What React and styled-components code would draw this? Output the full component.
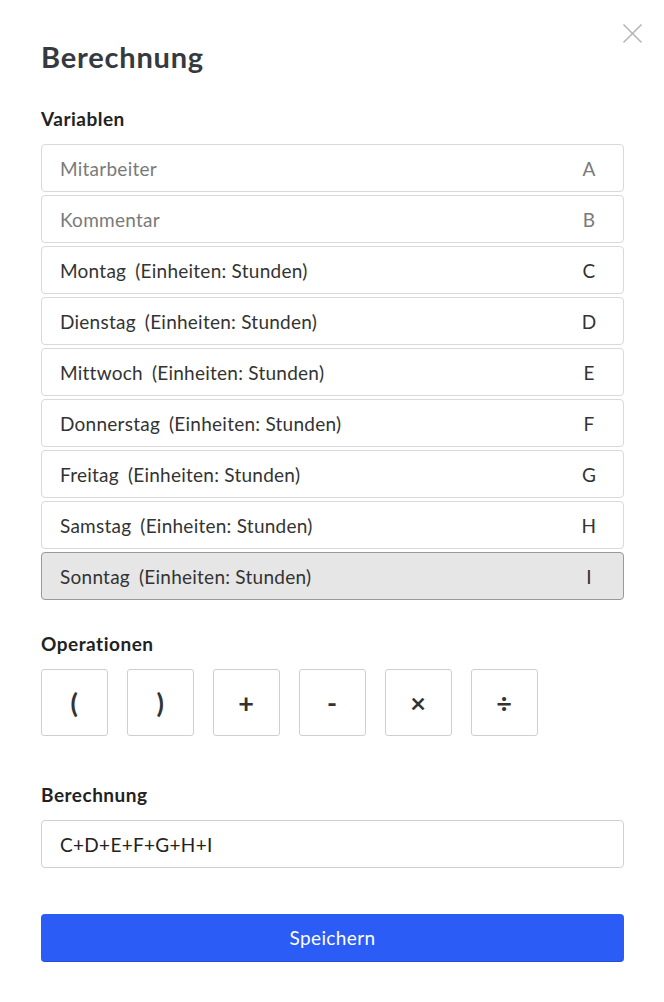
import { useState } from 'react';
import { styled, createGlobalStyle } from 'styled-components';

const GlobalStyle = createGlobalStyle`
  * {
    box-sizing: border-box;
  }
  body {
    margin: 0;
    background: #fff;
    font-family: 'Lato', 'Open Sans', sans-serif;
    letter-spacing: 0.3px;
  }
  button, input {
    letter-spacing: inherit;
  }
`;

const Modal = styled.div`
  position: relative;
  width: 664px;
  min-height: 1002px;
  padding: 40px 40px 0 41px;
  background: #fff;
`;

const CloseButton = styled.button`
  position: absolute;
  top: 23px;
  right: 21px;
  width: 21px;
  height: 21px;
  padding: 0;
  border: none;
  background: transparent;
  cursor: pointer;
  display: flex;
  align-items: center;
  justify-content: center;
`;

const Title = styled.h1`
  margin: 0 0 34px;
  font-size: 29px;
  line-height: 34px;
  font-weight: 700;
  letter-spacing: 0.8px;
  color: #343a40;
`;

const SectionLabel = styled.h2`
  margin: ${(p) => p.$top || 0}px 0 14px;
  font-size: 19px;
  line-height: 22px;
  font-weight: 700;
  letter-spacing: 0.5px;
  color: #222;
`;

const VariableList = styled.div`
  display: flex;
  flex-direction: column;
  gap: 3px;
`;

const VariableRow = styled.div`
  display: flex;
  align-items: center;
  justify-content: space-between;
  height: 48px;
  padding: 0 22px 0 18px;
  border: 1px solid ${(p) => (p.$active ? '#9a9a9a' : '#d9d9d9')};
  border-radius: 4px;
  background: ${(p) => (p.$active ? '#e6e6e6' : '#fff')};
  font-size: 19px;
  letter-spacing: 0.25px;
  color: ${(p) => (p.$muted ? '#7a7a7a' : '#333')};
  cursor: pointer;
`;

const VariableName = styled.span`
  white-space: pre;
`;

const Unit = styled.span`
  margin-left: 9px;
`;

const VariableKey = styled.span`
  width: 24px;
  text-align: center;
`;

const Operations = styled.div`
  display: flex;
  gap: 19.3px;
`;

const OpButton = styled.button`
  width: 66.7px;
  height: 67px;
  padding: 0;
  border: 1px solid #cfcfcf;
  border-radius: 3px;
  background: #fff;
  font-family: 'Lato', sans-serif;
  font-size: 27px;
  font-weight: 700;
  color: #333;
  cursor: pointer;
  display: flex;
  align-items: center;
  justify-content: center;
`;

const FormulaInput = styled.input`
  display: block;
  width: 100%;
  height: 48px;
  padding: 0 18px;
  border: 1px solid #d0d0d0;
  border-radius: 4px;
  font-family: 'Lato', sans-serif;
  font-size: 19px;
  color: #222;
  outline: none;
`;

const SaveButton = styled.button`
  display: block;
  width: 100%;
  height: 48px;
  margin-top: 46px;
  border: none;
  border-bottom: 1px solid #1f4ed6;
  border-radius: 4px;
  background: #2b5cf6;
  font-family: 'Lato', sans-serif;
  font-size: 19px;
  letter-spacing: 0.4px;
  color: #fff;
  cursor: pointer;
`;

const variables = [
  { name: 'Mitarbeiter', key: 'A', muted: true },
  { name: 'Kommentar', key: 'B', muted: true },
  { name: 'Montag', unit: 'Stunden', key: 'C' },
  { name: 'Dienstag', unit: 'Stunden', key: 'D' },
  { name: 'Mittwoch', unit: 'Stunden', key: 'E' },
  { name: 'Donnerstag', unit: 'Stunden', key: 'F' },
  { name: 'Freitag', unit: 'Stunden', key: 'G' },
  { name: 'Samstag', unit: 'Stunden', key: 'H' },
  { name: 'Sonntag', unit: 'Stunden', key: 'I' },
];

const operations = ['(', ')', '+', '-', '×', '÷'];

function App() {
  const [active, setActive] = useState('I');
  const [formula, setFormula] = useState('C+D+E+F+G+H+I');

  return (
    <>
      <GlobalStyle />
      <Modal>
        <CloseButton aria-label="Schließen">
          <svg width="21" height="21" viewBox="0 0 21 21">
            <path d="M1.5 1.5 L19.5 19.5 M19.5 1.5 L1.5 19.5" stroke="#b3b3b3" strokeWidth="1.5" fill="none" />
          </svg>
        </CloseButton>
        <Title>Berechnung</Title>

        <SectionLabel>Variablen</SectionLabel>
        <VariableList>
          {variables.map((v) => (
            <VariableRow
              key={v.key}
              $muted={v.muted}
              $active={active === v.key}
              onClick={() => setActive(v.key)}
            >
              <VariableName>
                {v.name}
                {v.unit && <Unit>(Einheiten: {v.unit})</Unit>}
              </VariableName>
              <VariableKey>{v.key}</VariableKey>
            </VariableRow>
          ))}
        </VariableList>

        <SectionLabel $top={33}>Operationen</SectionLabel>
        <Operations>
          {operations.map((op) => (
            <OpButton key={op} onClick={() => setFormula(formula + op)}>
              {op}
            </OpButton>
          ))}
        </Operations>

        <SectionLabel $top={48}>Berechnung</SectionLabel>
        <FormulaInput value={formula} onChange={(e) => setFormula(e.target.value)} />

        <SaveButton>Speichern</SaveButton>
      </Modal>
    </>
  );
}

export default App;
